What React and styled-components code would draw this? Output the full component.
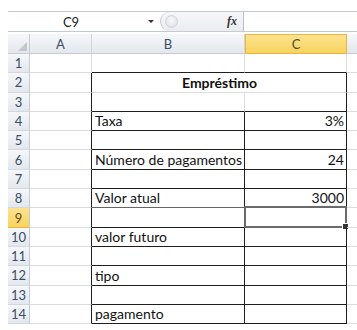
import React from 'react';
import styled, { createGlobalStyle, css } from 'styled-components';

const GlobalStyle = createGlobalStyle`
  html, body {
    margin: 0;
    padding: 0;
    background: #fff;
  }
  body {
    font-family: Lato, "Liberation Sans", sans-serif;
  }
`;

const LIGHT = '#dadcdd';
const DARK = '#1e1e1e';

const Page = styled.div`
  width: 357px;
  height: 330px;
  overflow: hidden;
  padding: 11px 0 0 8px;
  box-sizing: border-box;
`;

const FormulaBar = styled.div`
  display: flex;
  height: 21px;
  border-top: 1px solid #c5cbd3;
  border-bottom: 1px solid #c5cbd3;
  box-sizing: border-box;
`;

const NameBox = styled.div`
  width: 152px;
  display: flex;
  align-items: center;
  font-size: 13px;
  color: #222;

  span {
    flex: 1;
    text-align: center;
    padding-right: 14px;
  }
`;

const Arrow = styled.div`
  width: 0;
  height: 0;
  border-left: 3px solid transparent;
  border-right: 3px solid transparent;
  border-top: 3px solid #333;
  margin-right: 6px;
`;

const FxArea = styled.div`
  width: 83px;
  display: flex;
  align-items: center;
  justify-content: space-between;
  background: linear-gradient(#f6f7f9, #e9ecf0);
  border-radius: 10px 0 0 10px;
  border-left: 1px solid #c3c8cf;
  padding: 0 6px 0 4px;
  box-sizing: border-box;
`;

const Grip = styled.div`
  width: 11px;
  height: 11px;
  border-radius: 50%;
  background: radial-gradient(circle at 50% 40%, #fafafa, #d7dbe0);
  border: 1px solid #d0d4da;
`;

const Fx = styled.span`
  font-family: "Liberation Serif", serif;
  font-style: italic;
  font-weight: bold;
  font-size: 12px;
  color: #333;
`;

const FormulaInput = styled.div`
  flex: 1;
  border-left: 1px solid #b7bec8;
  background: #fff;
`;

const Sheet = styled.div`
  margin-top: 2px;
  display: grid;
  grid-template-columns: 22px 62px 153px 102px 30px;
  grid-template-rows: 20px repeat(14, 19.3px);
`;

const headerBg = css`
  background: linear-gradient(#f5f7fa, #e3e8ee);
`;

const Corner = styled.div`
  ${headerBg};
  border-right: 1px solid #c5cbd3;
  border-bottom: 1px solid #c5cbd3;
  box-sizing: border-box;
  position: relative;

  &::after {
    content: '';
    position: absolute;
    right: 2px;
    bottom: 2px;
    width: 0;
    height: 0;
    border-left: 9px solid transparent;
    border-bottom: 9px solid #c3c7cc;
  }
`;

const ColHead = styled.div`
  ${headerBg};
  display: flex;
  align-items: center;
  justify-content: center;
  font-size: 13px;
  color: #3c4c63;
  border-right: 1px solid #d0d5dc;
  border-bottom: 1px solid #c5cbd3;
  box-sizing: border-box;

  ${(p) =>
    p.$active &&
    css`
      background: linear-gradient(#fbe38f, #f8d35e);
      border: 1px solid #f0b440;
      color: #4a4a30;
    `}
`;

const RowHead = styled.div`
  ${headerBg};
  display: flex;
  align-items: center;
  justify-content: center;
  font-size: 13px;
  color: #3c4c63;
  border-right: 1px solid #c5cbd3;
  border-bottom: 1px solid #d3d8de;
  box-sizing: border-box;

  ${(p) =>
    p.$active &&
    css`
      background: linear-gradient(#fbe38f, #f8d35e);
      border-bottom-color: #f0b440;
      color: #6a4a20;
    `}
`;

const Cell = styled.div`
  box-sizing: border-box;
  display: flex;
  align-items: flex-end;
  justify-content: ${(p) =>
    p.$align === 'right' ? 'flex-end' : p.$align === 'center' ? 'center' : 'flex-start'};
  padding: 0 2px 1px 3px;
  font-size: 14px;
  font-weight: ${(p) => (p.$bold ? 700 : 400)};
  color: #111;
  white-space: nowrap;
  border-right: 1px solid ${(p) => p.$right || LIGHT};
  border-bottom: 1px solid ${(p) => p.$bottom || LIGHT};
  grid-column: ${(p) => (p.$span ? `span ${p.$span}` : 'auto')};
  position: relative;
`;

const Selection = styled.div`
  position: absolute;
  left: -1px;
  top: -2px;
  right: -1px;
  bottom: -1px;
  border: 2px solid #6a6a6a;
  box-sizing: border-box;

  &::after {
    content: '';
    position: absolute;
    right: -4px;
    bottom: -4px;
    width: 5px;
    height: 5px;
    background: #333;
    border: 1px solid #fff;
  }
`;

const rows = [
  { n: 1 },
  { n: 2, title: 'Empréstimo' },
  { n: 3 },
  { n: 4, b: 'Taxa', c: '3%' },
  { n: 5 },
  { n: 6, b: 'Número de pagamentos', c: '24' },
  { n: 7 },
  { n: 8, b: 'Valor atual', c: '3000' },
  { n: 9, selected: true },
  { n: 10, b: 'valor futuro' },
  { n: 11 },
  { n: 12, b: 'tipo' },
  { n: 13 },
  { n: 14, b: 'pagamento' },
];

const App = () => {
  return (
    <Page>
      <GlobalStyle />
      <FormulaBar>
        <NameBox>
          <span>C9</span>
          <Arrow />
        </NameBox>
        <FxArea>
          <Grip />
          <Fx>fx</Fx>
        </FxArea>
        <FormulaInput />
      </FormulaBar>
      <Sheet>
        <Corner />
        <ColHead>A</ColHead>
        <ColHead>B</ColHead>
        <ColHead $active>C</ColHead>
        <ColHead />
        {rows.map((r) => {
          const inTable = r.n >= 2;
          const aRight = inTable ? DARK : LIGHT;
          const bBottom = r.n === 1 || r.n >= 3 ? DARK : LIGHT;
          const bRight = r.n >= 4 ? DARK : LIGHT;
          const cRight = inTable ? DARK : LIGHT;
          const cBottom = r.n === 1 || r.n >= 3 ? DARK : LIGHT;
          return (
            <React.Fragment key={r.n}>
              <RowHead $active={r.selected}>{r.n}</RowHead>
              <Cell $right={aRight} />
              {r.title ? (
                <Cell $span={2} $align="center" $bold $right={cRight} $bottom={LIGHT}>
                  {r.title}
                </Cell>
              ) : (
                <>
                  <Cell $right={bRight} $bottom={r.n === 8 ? '#666' : bBottom}>
                    {r.b}
                  </Cell>
                  <Cell $align="right" $right={cRight} $bottom={cBottom}>
                    {r.c}
                    {r.selected && <Selection />}
                  </Cell>
                </>
              )}
              <Cell />
            </React.Fragment>
          );
        })}
      </Sheet>
    </Page>
  );
};

export default App;
